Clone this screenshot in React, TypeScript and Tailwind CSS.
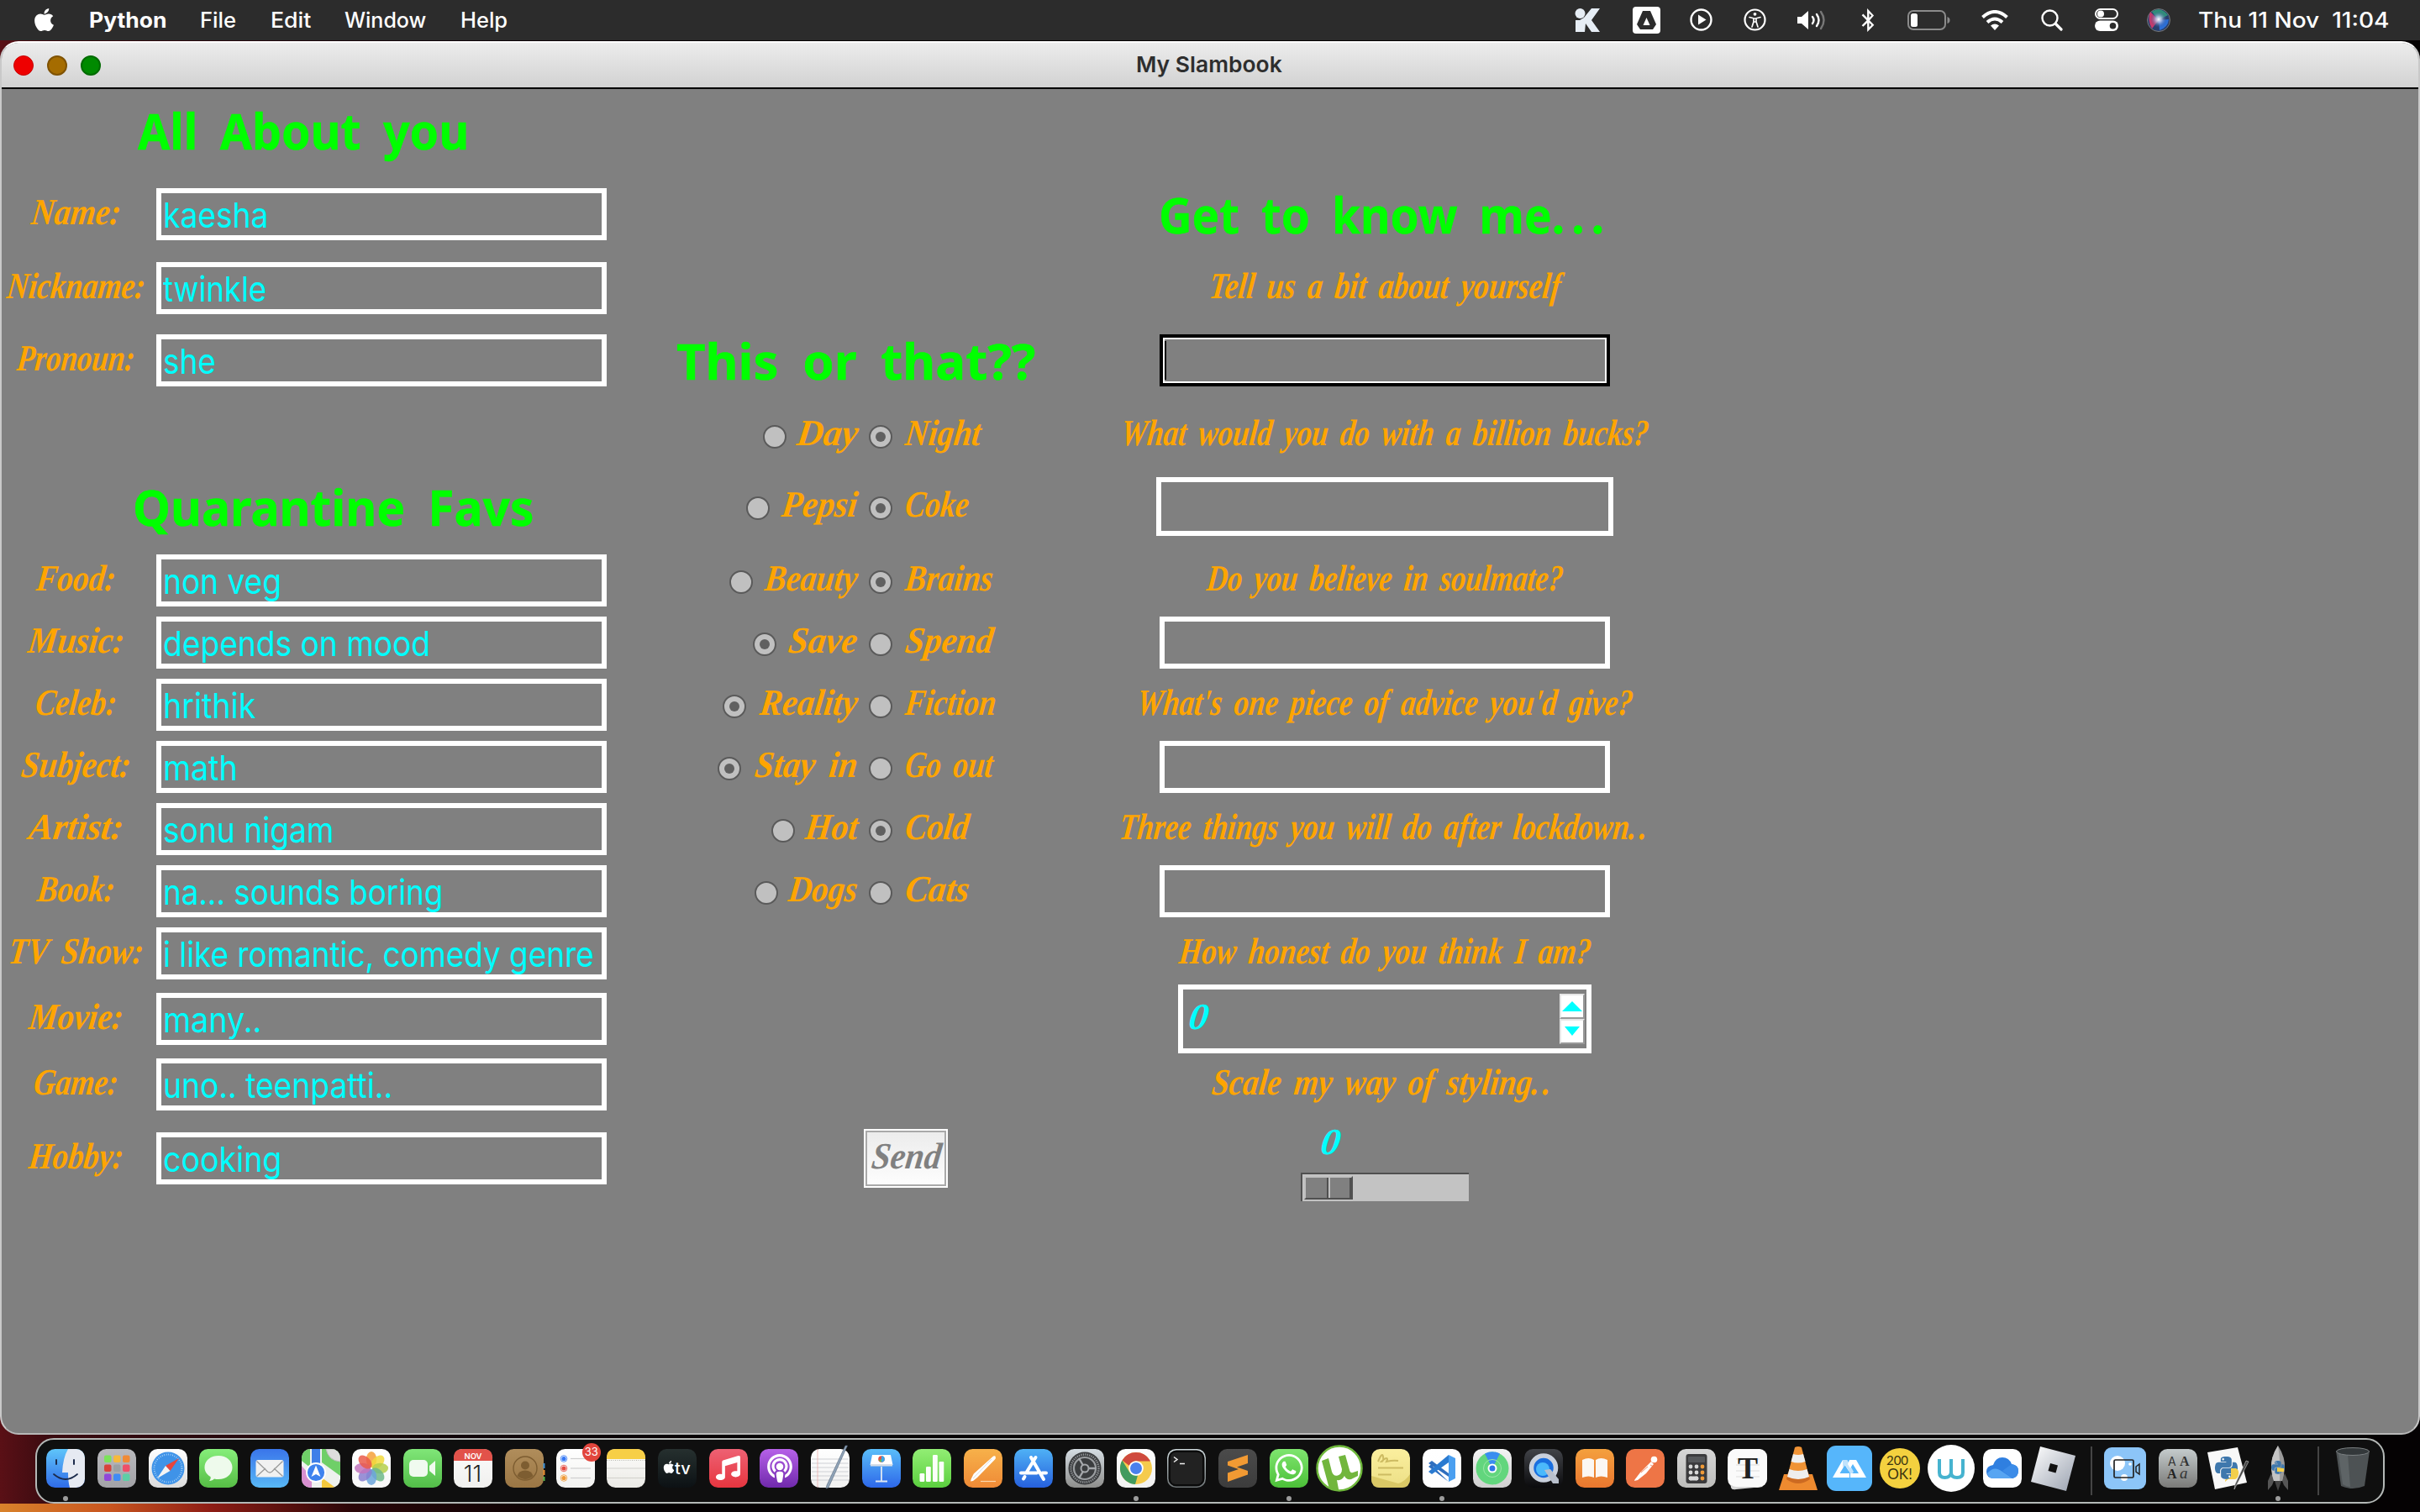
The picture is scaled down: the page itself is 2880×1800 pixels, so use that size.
import React, { useLayoutEffect, useRef, useState } from "react";
import { FaApple, FaWhatsapp, FaPython, FaBluetoothB, FaPodcast, FaMusic } from "react-icons/fa";

/* Text stretched horizontally to a given advance width. */
function Fit({ w, children, className = "", skew = 0 }: { w: number; children: React.ReactNode; className?: string; skew?: number }) {
  const ref = useRef<HTMLSpanElement>(null);
  const [k, setK] = useState(1);
  useLayoutEffect(() => {
    if (ref.current && ref.current.offsetWidth) setK(w / ref.current.offsetWidth);
  }, [w]);
  return (
    <span className={`block shrink-0 whitespace-pre ${className}`} style={{ width: w }}>
      <span ref={ref} className="inline-block origin-bottom-left" style={{ transform: `scaleX(${k}) skewX(${skew}deg)` }}>
        {children}
      </span>
    </span>
  );
}

const Script = ({ w, children, className = "text-[#ffa500]" }: { w: number; children: React.ReactNode; className?: string }) => (
  <Fit w={w} skew={-8} className={`-ml-[4px] pb-[5px] font-['Liberation_Serif',serif] text-[44px] leading-none font-bold italic [word-spacing:7px] ${className}`}>
    {children}
  </Fit>
);

const Heading = ({ w, children }: { w: number; children: React.ReactNode }) => (
  <Fit w={w} className="font-['Noto_Sans',sans-serif] text-[60px] leading-none font-bold text-[#00ff00] [word-spacing:13px] [-webkit-text-stroke:0.5px_#00ff00]">
    {children}
  </Fit>
);

const Entry = ({ text, w }: { text?: string; w?: number }) => (
  <div className="flex h-[62px] w-[536px] items-center border-[6px] border-white pt-[2px] pl-[2px]">
    {text && (
      <Fit w={w!} className="font-['Inter',sans-serif] text-[41px] leading-none text-[#00ffff]">
        {text}
      </Fit>
    )}
  </div>
);

const Radio = ({ on }: { on: boolean }) => (
  <span className="mt-[3px] flex size-7 shrink-0 items-center justify-center rounded-full border-2 border-[#5a5a5a] bg-[#c0c0c0]">
    {on && <span className="size-3 rounded-full bg-[#606060]" />}
  </span>
);

const Label = ({ w, children }: { w: number; children: string }) => (
  <div className="flex items-center justify-center">
    <Script w={w}>{children}</Script>
  </div>
);

const Field = ({ text, w }: { text: string; w: number }) => (
  <div className="flex items-center pl-2">
    <Entry text={text} w={w} />
  </div>
);

const Left = ({ w, x, on, children }: { w: number; x: number; on: boolean; children: string }) => (
  <div className="flex items-center justify-end pr-[8px]">
    <div className="flex items-center justify-between" style={{ width: 1018 - x }}>
      <Radio on={on} />
      <Script w={w}>{children}</Script>
    </div>
  </div>
);

const Right = ({ w, on, children }: { w: number; on: boolean; children: string }) => (
  <div className="flex items-center gap-[17px] pl-2">
    <Radio on={on} />
    <Script w={w}>{children}</Script>
  </div>
);

const Mid = ({ children }: { children?: React.ReactNode }) => <div className="flex items-center justify-center">{children}</div>;

function Form() {
  return (
    <div className="grid grid-cols-[176px_552px_296px_294px_656px] grid-rows-[86px_114px_62px_110px_68px_102px_74px_74px_74px_74px_74px_74px_74px_82px_74px_102px] pt-[6px]">
      <div className="col-span-2 flex items-center justify-center pr-[10px]">
        <Heading w={394}>All About you</Heading>
      </div>
      <div className="col-span-3" />

      <Label w={106}>Name:</Label>
      <Field text="kaesha" w={125} />
      <div className="col-span-2" />
      <Mid><Heading w={538}>Get to know me<span className="tracking-[9px]">...</span></Heading></Mid>

      <Label w={164}>Nickname:</Label>
      <Field text="twinkle" w={123} />
      <div className="col-span-2" />
      <Mid><Script w={418}>Tell us a bit about yourself</Script></Mid>

      <Label w={140}>Pronoun:</Label>
      <Field text="she" w={63} />
      <div className="col-span-2 flex items-center justify-center pr-[13px]">
        <Heading w={427}>This or that??</Heading>
      </div>
      <Mid>
        <div className="h-[62px] w-[536px] border-4 border-black">
          <div className="flex h-full items-center border-2 border-white">
            <span className="h-[46px] w-[2px] bg-black" />
          </div>
        </div>
      </Mid>

      <div className="col-span-2" />
      <Left w={72} x={908} on={false}>Day</Left>
      <Right w={90} on>Night</Right>
      <Mid><Script w={628}>What would you do with a billion bucks?</Script></Mid>

      <div className="col-span-2 flex items-center justify-center pl-[62px]">
        <Heading w={478}>Quarantine Favs</Heading>
      </div>
      <Left w={90} x={888} on={false}>Pepsi</Left>
      <Right w={76} on>Coke</Right>
      <Mid><div className="h-[70px] w-[544px] border-[6px] border-white" /></Mid>

      <Label w={94}>Food:</Label>
      <Field text="non veg" w={141} />
      <Left w={110} x={868} on={false}>Beauty</Left>
      <Right w={104} on>Brains</Right>
      <Mid><Script w={424}>Do you believe in soulmate?</Script></Mid>

      <Label w={114}>Music:</Label>
      <Field text="depends on mood" w={318} />
      <Left w={82} x={896} on>Save</Left>
      <Right w={104} on={false}>Spend</Right>
      <Mid><Entry /></Mid>

      <Label w={96}>Celeb:</Label>
      <Field text="hrithik" w={110} />
      <Left w={116} x={860} on>Reality</Left>
      <Right w={108} on={false}>Fiction</Right>
      <Mid><Script w={590}>What's one piece of advice you'd give?</Script></Mid>

      <Label w={130}>Subject:</Label>
      <Field text="math" w={89} />
      <Left w={122} x={854} on>Stay in</Left>
      <Right w={104} on={false}>Go out</Right>
      <Mid><Entry /></Mid>

      <Label w={112}>Artist:</Label>
      <Field text="sonu nigam" w={203} />
      <Left w={62} x={918} on={false}>Hot</Left>
      <Right w={76} on>Cold</Right>
      <Mid><Script w={632}>Three things you will do after lockdown<span className="tracking-[5px]">..</span></Script></Mid>

      <Label w={92}>Book:</Label>
      <Field text="na... sounds boring" w={333} />
      <Left w={82} x={898} on={false}>Dogs</Left>
      <Right w={76} on={false}>Cats</Right>
      <Mid><Entry /></Mid>

      <Label w={160}>TV Show:</Label>
      <Field text="i like romantic, comedy genre" w={513} />
      <div className="col-span-2" />
      <Mid><Script w={490}>How honest do you think I am?</Script></Mid>

      <Label w={112}>Movie:</Label>
      <Field text="many.." w={117} />
      <div className="col-span-2" />
      <Mid>
        <div className="flex h-[82px] w-[492px] items-center justify-between border-[6px] border-white pr-[2px] pl-[8px]">
          <Script w={23} className="text-[#00ffff]">0</Script>
          <div className="flex h-[60px] w-[30px] flex-col">
            {["M15 9 L27 21 H3 Z", "M15 20 L24 9 H6 Z"].map((d) => (
              <span key={d} className="h-[30px] border-2 border-t-[#e6e6e6] border-r-[#999] border-b-[#999] border-l-[#e6e6e6] bg-white">
                <svg viewBox="2 2 26 26" className="size-[26px]"><path d={d} fill="#00ffff" /></svg>
              </span>
            ))}
          </div>
        </div>
      </Mid>

      <Label w={100}>Game:</Label>
      <Field text="uno.. teenpatti.." w={273} />
      <div className="col-span-2" />
      <Mid><Script w={408} className="mr-[4px] text-[#ffa500]">Scale my way of styling<span className="tracking-[5px]">..</span></Script></Mid>

      <Label w={112}>Hobby:</Label>
      <Field text="cooking" w={141} />
      <div className="col-span-2 flex items-center pl-[298px]">
        <div className="flex h-[70px] w-[100px] items-center justify-center border-2 border-white">
          <div className="flex h-full w-full items-center justify-center border-2 border-[#a9a9a9] bg-gradient-to-b from-[#ececec] to-[#fdfdfd]">
            <Script w={82} className="text-[#808080]">Send</Script>
          </div>
        </div>
      </div>
      <div className="flex flex-col items-center justify-between pt-[10px]">
        <Script w={23} className="mr-[132px] text-[#00ffff]">0</Script>
        <div className="flex h-[34px] w-[200px] border-t-2 border-l-2 border-[#505050] bg-[#c3c3c3] pt-[2px] pl-[2px]">
          <div className="flex h-[28px] w-[58px] border-2 border-t-[#c0c0c0] border-r-[#505050] border-b-[#505050] border-l-[#c0c0c0]">
            <span className="h-full w-[27px] border-r-2 border-[#505050] bg-[#808080]" />
            <span className="h-full w-[27px] border-r-2 border-l-2 border-l-[#c0c0c0] border-r-[#505050] bg-[#808080]" />
          </div>
        </div>
      </div>
    </div>
  );
}

function MenuBar() {
  const item = "font-['Inter',sans-serif] text-[25px] leading-[48px] text-white";
  return (
    <header className="flex h-12 items-center bg-[#2c2c2c] pb-px">
      <FaApple className="ml-[37px] size-[31px] text-white" />
      <Fit w={92} className={`${item} ml-[38px] font-bold`}>Python</Fit>
      <Fit w={43} className={`${item} ml-[40px] font-medium`}>File</Fit>
      <Fit w={48} className={`${item} ml-[41px] font-medium`}>Edit</Fit>
      <Fit w={97} className={`${item} ml-[40px] font-medium`}>Window</Fit>
      <Fit w={56} className={`${item} ml-[41px] font-medium`}>Help</Fit>
      <div className="flex-1" />
      <svg className="h-7 w-[31px]" viewBox="0 0 31 28" fill="#e6edf5"><circle cx="6.500" cy="6" r="6" /><path d="M1 14h5l5-3L20 0h10L20 14l10 14H20l-7-10-1 10H1z" /></svg>
      <svg className="ml-[38px] h-8 w-[33px]" viewBox="0 0 33 32"><rect width="33" height="32" rx="4" fill="#fff" /><path d="M12 5h9l7 16-4 6H9l-4-6z" fill="#2c2c2c" /><path d="M16.500 13l4 9h-8z" fill="#fff" /></svg>
      <svg className="ml-[35px] size-[27px]" viewBox="0 0 27 27"><circle cx="13.500" cy="13.500" r="12" fill="none" stroke="#fff" strokeWidth="2.400" /><path d="M10 7.500l9.500 6-9.500 6z" fill="#fff" /></svg>
      <svg className="ml-[37px] size-[27px]" viewBox="0 0 27 27" fill="none" stroke="#fff"><circle cx="13.500" cy="13.500" r="12" strokeWidth="2.200" /><circle cx="13.500" cy="6.800" r="1.900" fill="#fff" stroke="none" /><path d="M7 10.500l5 1.300v4L10 22M20 10.500l-5 1.300v4L17 22M12 12h3v4h-3z" strokeWidth="1.700" strokeLinecap="round" /></svg>
      <svg className="ml-[36px] h-[26px] w-[37px]" viewBox="0 0 37 26" fill="none" stroke="#fff" strokeLinecap="round" strokeWidth="2.400"><path d="M1 9h5l8-7v22l-8-7H1z" fill="#fff" stroke="none" /><path d="M19 9q3 4 0 8M24 6q5 7 0 14" /><path d="M29 3q7 10 0 20" stroke="#777" /></svg>
      <FaBluetoothB className="ml-[38px] h-7 w-[20px] text-white" />
      <svg className="ml-[37px] h-6 w-[51px]" viewBox="0 0 51 24"><rect x="1" y="1" width="44" height="22" rx="6" fill="none" stroke="#8b8b8b" strokeWidth="2" /><rect x="4" y="4" width="8" height="16" rx="2.500" fill="#fff" /><path d="M47.500 8v8q3-1 3-4t-3-4z" fill="#8b8b8b" /></svg>
      <svg className="ml-[37px] h-6 w-8" viewBox="0 0 32 24" fill="none" stroke="#fff" strokeWidth="4"><path d="M1.500 8.500q14.500-13 29 0M7 14.500q9-8 18 0" /><path d="M16 24l-5-5.500q5-4 10 0z" fill="#fff" stroke="none" /></svg>
      <svg className="ml-[39px] size-[26px]" viewBox="0 0 26 26" fill="none" stroke="#fff" strokeLinecap="round"><circle cx="10.500" cy="10.500" r="9" strokeWidth="2.400" /><path d="M17.500 17.500l6.500 6.500" strokeWidth="3.200" /></svg>
      <svg className="ml-[38px] h-[27px] w-[28px]" viewBox="0 0 28 27"><rect x="1" y="1" width="26" height="11" rx="5.500" fill="none" stroke="#fff" strokeWidth="2" /><circle cx="7" cy="6.500" r="4" fill="#fff" /><rect y="14.500" width="28" height="12.500" rx="6.200" fill="#fff" /><circle cx="21.500" cy="20.800" r="3.800" fill="#2c2c2c" /></svg>
      <svg className="mr-[33px] ml-[34px] size-7" viewBox="0 0 28 28"><defs><radialGradient id="siri"><stop offset="0" stopColor="#fff" /><stop offset=".35" stopColor="#b9c6ea" stopOpacity=".8" /><stop offset="1" stopColor="#2a4b8c" stopOpacity="0" /></radialGradient></defs><circle cx="14" cy="14" r="13.500" fill="#28406f" stroke="#777" /><path d="M14 14L4 4Q0 14 6 24z" fill="#c43a6b" /><path d="M14 14L6 4q10-7 19 4z" fill="#2f8f78" /><path d="M14 14l12-1q-1 10-11 13z" fill="#2c6fd6" /><circle cx="14" cy="13" r="10" fill="url(#siri)" /></svg>
      <Fit w={228} className={`${item} mr-[36px] font-medium`}>{"Thu 11 Nov  11:04"}</Fit>
    </header>
  );
}

/* Rounded-square dock icon, drawn in a 46 × 46 box. */
const Tile = ({ from, to, id, children }: { from: string; to: string; id: string; children?: React.ReactNode }) => (
  <svg viewBox="0 0 46 46" className="size-[46px] overflow-visible">
    <defs>
      <linearGradient id={id} x1="0" y1="0" x2="0" y2="1"><stop offset="0" stopColor={from} /><stop offset="1" stopColor={to} /></linearGradient>
      <clipPath id={`${id}-clip`}><rect width="46" height="46" rx="10.500" /></clipPath>
    </defs>
    <rect width="46" height="46" rx="10.500" fill={`url(#${id})`} />
    {children}
  </svg>
);

const petals = ["#f4a03a", "#f2d93c", "#b5cf4b", "#6fb98a", "#6ba4dc", "#8a7fd0", "#c274bd", "#ea5a4b"];
const pads = ["#7be35a", "#f6b93c", "#f08a35", "#d8423a", "#9aa0a3", "#ee4f68", "#9147d8", "#3f8cf5", "#5ccfa6"];

const dock: { dot?: boolean; badge?: string; el: React.ReactNode }[] = [
  { dot: true, el: <Tile id="finder" from="#5fc5fa" to="#2f6be8"><g clipPath="url(#finder-clip)"><path d="M26 0h20v46H28q-2-7-2-18h-7Q20 10 26 0z" fill="#e6eaf2" /></g><path d="M12 13v5M33 13v5" stroke="#1c2c4c" strokeWidth="2" strokeLinecap="round" /><path d="M9 30q14 12 28 0" fill="none" stroke="#1c2c4c" strokeWidth="1.800" strokeLinecap="round" /></Tile> },
  { el: <Tile id="pad" from="#b9b9bd" to="#a2a2a6">{pads.map((c, i) => <rect key={c} x={8 + (i % 3) * 11} y={7.500 + Math.floor(i / 3) * 11} width="8.500" height="8.500" rx="2" fill={c} />)}</Tile> },
  { el: <Tile id="safari" from="#ffffff" to="#dcdcdc"><circle cx="23" cy="23" r="19.500" fill="#3f93e8" /><circle cx="23" cy="23" r="16.500" fill="none" stroke="#b9dcf8" strokeWidth="2" strokeDasharray=".7 1.800" /><path d="M36 11L25.500 26 20 20z" fill="#e8453c" /><path d="M10 35l10-15 5.500 6z" fill="#f4f4f4" /></Tile> },
  { el: <Tile id="msg" from="#86ee7a" to="#56bd45"><path d="M23 8c9.500 0 16.500 6 16.500 14S32.500 36 23 36c-2 0-3.500-.2-5-.6-1.500 1.500-3.500 2.500-6 2.500 1.500-1.500 2-3 1.500-5C9 30.500 6.500 26.500 6.500 22 6.500 14 13.500 8 23 8z" fill="#eefaec" /></Tile> },
  { el: <Tile id="mail" from="#3a75ea" to="#58b8f6"><rect x="6.500" y="13" width="33" height="20.500" rx="2.500" fill="#f1f1f1" /><path d="M7.500 14.500l13 12.500q2.500 2 5 0l13-12.500M7.500 32.500L18 23M38.500 32.500L28 23" fill="none" stroke="#9a9a9a" strokeWidth="1.300" /></Tile> },
  { el: <Tile id="maps" from="#eef1ee" to="#eef1ee"><g clipPath="url(#maps-clip)"><path d="M0 0h10v22L0 14z" fill="#6fcf68" /><path d="M24 0h22v32L24 16z" fill="#6fcf68" /><path d="M46 0v15Q32 14 29 0z" fill="#ddd" stroke="#bbb" /><path d="M0 20l12 14v12H0z" fill="#d88fd0" /><path d="M24 34l16 12H24z" fill="#f5c93d" /><path d="M12 0h10v24H12z" fill="#3f7fe8" /></g><circle cx="17" cy="28" r="11" fill="#3f83ee" stroke="#fff" strokeWidth="1.800" /><path d="M17 19.500l5.500 13.500-5.500-3-5.500 3z" fill="#fff" /></Tile> },
  { el: <Tile id="photos" from="#ffffff" to="#f7f7f7">{petals.map((c, i) => <ellipse key={c} cx="23" cy="12.500" rx="6.200" ry="9.500" fill={c} opacity=".85" transform={`rotate(${i * 45} 23 23)`} />)}</Tile> },
  { el: <Tile id="ft" from="#80e678" to="#52bd48"><rect x="7" y="13" width="22" height="20" rx="5" fill="#f0faef" /><path d="M31 20l7-6v18l-7-6z" fill="#f0faef" /></Tile> },
  { el: <Tile id="cal" from="#fbfbfb" to="#f0f0ee"><path d="M0 14V10.500Q0 0 10.500 0h25Q46 0 46 10.500V14z" fill="#e2524a" /><text x="23" y="11.500" textAnchor="middle" fontSize="9.500" fontWeight="600" fill="#fff" fontFamily="Inter">NOV</text><text x="22.500" y="39" textAnchor="middle" fontSize="27" fontWeight="300" fill="#222" fontFamily="Inter">11</text></Tile> },
  { el: <Tile id="contacts" from="#b08d5b" to="#9b7644"><path d="M45.500 17h2v6h-2z" fill="#3b8fd4" /><path d="M45.500 25h2v6h-2z" fill="#e88b2e" /><path d="M45.500 33h2v5h-2z" fill="#55b54c" /><circle cx="24" cy="23" r="14" fill="none" stroke="#7d5d31" strokeWidth="1.400" /><circle cx="24" cy="19.500" r="5" fill="#7d5d31" /><path d="M14.500 32q2-6.500 9.500-6.500t9.500 6.500q-9 8-19 0z" fill="#7d5d31" /></Tile> },
  { badge: "33", el: <Tile id="rem" from="#ffffff" to="#f2f2f0">{["#3478f6", "#e64b40", "#f09a37"].map((c, i) => <g key={c}><circle cx="9" cy={11.500 + i * 11.500} r="3.800" fill="none" stroke={c} strokeWidth=".8" /><circle cx="9" cy={11.500 + i * 11.500} r="2.600" fill={c} /><path d={`M17 ${11.500 + i * 11.500}h24`} stroke="#cfcfcf" strokeWidth="1.200" /></g>)}</Tile> },
  { el: <Tile id="notes" from="#fdfdfb" to="#ebeae6"><path d="M0 12V10.500Q0 0 10.500 0h25Q46 0 46 10.500V12z" fill="#f7cf46" /><path d="M0 13.500h46" stroke="#b9b9b0" strokeDasharray="1 1.500" /><path d="M0 23h46M0 34.500h46" stroke="#d2d1cc" /></Tile> },
  { el: <Tile id="tv" from="#26302f" to="#0c1114"><FaApple x="4.500" y="13" size="17" color="#fff" /><text x="20" y="29.500" fontSize="20" fontWeight="500" fill="#fff" fontFamily="Inter">tv</text></Tile> },
  { el: <Tile id="music" from="#ee6173" to="#e6353f"><FaMusic x="8" y="8" size="29" color="#fff" /></Tile> },
  { el: <Tile id="pod" from="#b661e8" to="#7029ac"><FaPodcast x="7" y="6" size="34" color="#fff" /></Tile> },
  { el: <Tile id="text" from="#ffffff" to="#f1f1f1"><path d="M1 12h44M1 17h44M1 22h44M1 27h44M1 32h44M1 37h44" stroke="#c9ccd0" strokeWidth=".9" /><path d="M8 0v46" stroke="#e9a4a0" strokeWidth=".7" /><path d="M43.500-4L21 46l-3 1 1-4L41-4z" fill="#8fa3b8" stroke="#56677a" strokeWidth=".6" /></Tile> },
  { el: <Tile id="key" from="#5abefa" to="#2d67e9"><path d="M12 7h22l2.500 12h-27z" fill="#fff" /><path d="M10 18h26v2.500H10z" fill="#d5dde6" /><circle cx="23" cy="12" r="3.800" fill="#e34f43" /><path d="M23 8.200a3.800 3.800 0 010 7.600z" fill="#3aa6e8" /><path d="M19.500 13.500L23 12v3.800z" fill="#67bd4f" /><path d="M23 21v17M16 38.500h14" stroke="#dfe8f2" strokeWidth="1.800" /></Tile> },
  { el: <Tile id="num" from="#92ee74" to="#5bcf3f">{[[8.500, 10], [16, 18], [24, 32], [31.500, 24]].map(([x, h]) => <rect key={x} x={x} y={39 - h} width="5.800" height={h} rx="1.200" fill="#fbfffa" />)}</Tile> },
  { el: <Tile id="pages" from="#f7b14a" to="#ef8a36"><path d="M37.500 8.500q1 2-.5 4L16 34l-5 4-3 .5.800-3 3-6L34 9.500q2-2 3.500-1z" fill="#fff" /><path d="M11 35l22-23" stroke="#d9d9d9" /><path d="M20 38.500h18" stroke="#fbd7ad" strokeWidth="1.200" /></Tile> },
  { el: <Tile id="store" from="#4fb1f5" to="#2660dd"><g stroke="#fff" strokeWidth="4" strokeLinecap="round" fill="none"><path d="M25.500 10L14.500 28M20 10l15 26M8 28.500h19M33.500 28.500H38M12.500 33l-1.500 2.500" /></g></Tile> },
  { el: <Tile id="prefs" from="#d5dde3" to="#8e8e8c"><circle cx="23" cy="23" r="19.500" fill="#3b3d3f" /><circle cx="23" cy="23" r="16.500" fill="none" stroke="#8f9295" strokeWidth="2.500" strokeDasharray="1.300 1.200" /><circle cx="23" cy="23" r="13" fill="none" stroke="#9a9da0" strokeWidth="2.200" /><circle cx="23" cy="23" r="4.500" fill="none" stroke="#a5a8ab" strokeWidth="2" /><path d="M27 23h10M21 19.500L16 11M21 26.500L16 35" stroke="#a5a8ab" strokeWidth="2.400" /></Tile> },
  { dot: true, el: <Tile id="chrome" from="#ffffff" to="#f1f1f1"><circle cx="23" cy="23" r="19" fill="#f5cb4d" /><path d="M6.500 13.500a19 19 0 0133 0L40 14.500H23A8.500 8.500 0 0015 20z" fill="#cf4a3e" /><path d="M6.500 13.500L15.500 28q3 4 9.500 3.500L22 42A19 19 0 016.500 13.500z" fill="#429b5e" /><circle cx="23" cy="23" r="8.800" fill="#fff" /><circle cx="23" cy="23" r="7" fill="#4a80ec" /></Tile> },
  { el: <Tile id="term" from="#cfdadd" to="#6c7274"><rect x="1.500" y="1.500" width="43" height="43" rx="9.500" fill="#0a0a0a" /><rect x="4" y="4" width="38" height="38" rx="6" fill="#222" /><path d="M8 9.500l4 3-4 3M15 17.500h6" stroke="#eee" strokeWidth="1.500" fill="none" /></Tile> },
  { el: <Tile id="subl" from="#4b4b4b" to="#3c3c3c"><path d="M35 7v10l-13 4.500 13 4.500v4.500L11 39V28.500l13-4.500-13-4.500V15z" fill="#f29a33" /></Tile> },
  { dot: true, el: <Tile id="wa" from="#7fe56f" to="#4cc038"><FaWhatsapp x="4" y="3.500" size="38" color="#fff" /></Tile> },
  { el: <svg viewBox="0 0 56 56" className="size-[56px] shrink-0"><defs><clipPath id="ut"><circle cx="28" cy="28" r="26.500" /></clipPath></defs><circle cx="28" cy="28" r="26.500" fill="#fff" /><g clipPath="url(#ut)"><path d="M7 19l8-3 4 16q2 6 7 4.500T31 29l-4-15 8-2 5 18q1 4 4 3l6-2v6l-8 4q-6 1-8-4-3 6-9 5l3 16-11-2z" fill="#72b63d" /></g><circle cx="28" cy="28" r="26.500" fill="none" stroke="#6fb83c" strokeWidth="2.500" /></svg> },
  { el: <Tile id="stick" from="#fbef9e" to="#ecdf86"><path d="M0 32v4Q0 46 10.500 46h25Q46 46 46 36v-6q-6 9-14 11z" fill="#d9c866" /><path d="M8 15q5-12 6-6t-2 6q4-4 6-4t0 4q8-2 14-1M8 22.500h30M8 30.500h16" fill="none" stroke="#cdbb62" strokeWidth="2" /></Tile> },
  { dot: true, el: <Tile id="code" from="#ffffff" to="#fdfdfd"><path d="M31 7v32L10 18.500 7 21l24 18V29L11 14 7 17l24 16z" fill="#2f6fbf" /><path d="M31 7L7 27l4 3 20-14z" fill="#2a7ad0" /><path d="M31 7l8 4v24l-8 4z" fill="#4a9ff0" /></Tile> },
  { el: <Tile id="find" from="#f4f4f4" to="#cfcfcf"><circle cx="23" cy="23" r="19.500" fill="#62d67d" /><path d="M23 23L14 5.500a20 20 0 0118 0z" fill="#3a8df0" /><circle cx="23" cy="23" r="10.500" fill="none" stroke="#9be6a8" /><circle cx="23" cy="23" r="4.500" fill="#2f76e8" stroke="#fff" strokeWidth="2" /></Tile> },
  { el: <Tile id="qt" from="#414348" to="#0b0b0d"><circle cx="23" cy="22.500" r="14.500" fill="#1a6fe0" stroke="#c9d0dc" strokeWidth="5.500" /><circle cx="22" cy="24" r="8" fill="#4bb9fb" /><path d="M24 25l7-1 10 12v5h-7z" fill="#b8bfcb" /></Tile> },
  { el: <Tile id="books" from="#f4a03e" to="#e9772f"><path d="M22 13q-6-4-14 0v21q8-3 14 0zM24 13q6-4 14 0v21q-8-3-14 0z" fill="#fbf7f2" /></Tile> },
  { el: <Tile id="post" from="#ee7546" to="#ee7546"><circle cx="33.500" cy="12.500" r="3.800" fill="#fff" /><path d="M30 15l3 3-9 11-10 8-4 1 .500-1.500L17 28z" fill="#fff" /><path d="M29 19l4 2-6 7M18 28l8-7" stroke="#ee7546" strokeWidth=".8" fill="none" /></Tile> },
  { el: <Tile id="calc" from="#d6d6d6" to="#bdbdbb"><rect x="10.500" y="6" width="25" height="35" rx="3" fill="#3b3b3d" /><rect x="13" y="9" width="20" height="7" rx="1" fill="#56585b" />{[0, 1, 2].map((r) => [0, 1, 2].map((c) => <circle key={`${r}${c}`} cx={16 + c * 7} cy={21 + r * 7} r="2.400" fill={c === 2 ? "#f09a37" : "#d8d8d8"} />))}<path d="M16 35h7" stroke="#d8d8d8" strokeWidth="4.800" strokeLinecap="round" /></Tile> },
  { el: <Tile id="typo" from="#ffffff" to="#f4f4f4"><path d="M0 10l4 36q1 3 6 2l32-3z" fill="#d8d8d8" /><rect x="1" width="46" height="45" rx="9" fill="#fafafa" /><path d="M10 12h28M10 19h28M10 26h28M10 33h28" stroke="#ddd" /><text x="24" y="35" textAnchor="middle" fontSize="36" fontWeight="600" fill="#222" fontFamily="Liberation Serif">T</text></Tile> },
  { el: <svg viewBox="0 0 46 52" className="h-[52px] w-[46px]"><path d="M6 33h34l6 19H0z" fill="#ee8a2f" /><path d="M9 39q14 10 28 0l-2-8H11z" fill="#cc6a22" /><path d="M19 1q4-2 8 0l9 35q-13 6-26 0z" fill="#f09335" /><path d="M17 9q6 2 12 0l2.500 9q-8.500 3-17 0zM12.500 27q10.500 4 21 0l2.500 9q-13 6-26 0z" fill="#eee" /></svg> },
  { el: <svg viewBox="0 0 54 54" className="size-[54px]"><rect width="54" height="54" rx="11" fill="#56b6fb" /><path d="M7 38l12-21h5l5 9-3 4-4.500-7-6 10H27v5z" fill="#fff" /><path d="M19 17h5l8 14-3 4-7-12-3 3z" fill="#bfe3fd" /><path d="M27 17h8l12 21H28v-5h10l-7-11-3 5-3-5z" fill="#fff" /></svg> },
  { el: <svg viewBox="0 0 50 50" className="size-[50px]"><circle cx="25" cy="25" r="24" fill="#f4d13f" /><text x="22" y="21" textAnchor="middle" fontSize="15" fill="#3a3410" fontFamily="Lato">200</text><text x="25" y="38" textAnchor="middle" fontSize="17" fill="#3a3410" fontFamily="Lato">OK!</text></svg> },
  { el: <svg viewBox="0 0 56 56" className="size-[56px] shrink-0"><circle cx="28" cy="28" r="28" fill="#fff" /><path d="M14 17v16q0 6 6.500 6t7.500-6V17M28 33q0 6 7 6t7-6V17" fill="none" stroke="#46b3cf" strokeWidth="4" /></svg> },
  { el: <Tile id="cloud" from="#ffffff" to="#ffffff"><path d="M12 35q-8-1-8-8t8-8q3-9 11-9t11 8q8 1 8 8t-7 9z" fill="#2f7fe0" /><path d="M5 29q8-10 18-2l12 8H12q-5 0-7-6z" fill="#57a5f2" /><path d="M23 26l11-8q8 1 8 8t-7 9z" fill="#3c8ce8" /></Tile> },
  { el: <svg viewBox="0 0 54 54" className="size-[54px]"><defs><linearGradient id="rbx" x1="0" y1="0" x2="1" y2="1"><stop offset="0" stopColor="#fff" /><stop offset="1" stopColor="#9aa2b0" /></linearGradient></defs><path d="M12 1l42 11-11 42L1 43z" fill="url(#rbx)" /><path d="M24 21l9 2.500-2.500 9-9-2.500z" fill="#111" /></svg> },
];

const Dot = ({ on }: { on?: boolean }) => <span className={`size-[6px] rounded-full ${on ? "bg-[#9c9c9c]" : "bg-transparent"}`} />;

function DockItem({ w, dot, badge, children }: { w: number; dot?: boolean; badge?: string; children: React.ReactNode }) {
  return (
    <div className="flex shrink-0 flex-col items-center" style={{ width: w }}>
      <div className="relative flex h-[67px] items-center justify-center pt-px">
        {children}
        {badge && (
          <span className="absolute top-[4px] -right-[7px] flex size-[22px] items-center justify-center rounded-full bg-[#e2463d] font-['Inter',sans-serif] text-[13px] text-white">{badge}</span>
        )}
      </div>
      <Dot on={dot} />
    </div>
  );
}

function Dock() {
  return (
    <div className="mx-auto mr-[42px] ml-[42px] flex h-[78px] rounded-[22px] border-2 border-[#b4b8b6] bg-[#0f0f0f] pl-[4px]">
      {dock.map((d, i) => (
        <DockItem key={i} w={60.65} dot={d.dot} badge={d.badge}>{d.el}</DockItem>
      ))}
      <span className="mt-2 ml-[14px] h-[58px] w-[2px] shrink-0 bg-[#444]" />
      <div className="w-[9px] shrink-0" />
      <DockItem w={61}>
        <svg viewBox="0 0 50 50" className="size-[50px]"><rect width="50" height="50" rx="9" fill="#8cc5f8" /><circle cx="16" cy="19" r="9" fill="#fff" /><circle cx="24" cy="36" r="4" fill="#fff" /><rect x="12" y="15" width="23" height="21" rx="1.500" fill="none" stroke="#222" strokeWidth="1.700" /><circle cx="31" cy="20" r="1.800" fill="#fff" /><path d="M38 23l4-3v12l-4-3z" fill="none" stroke="#222" strokeWidth="1.500" /></svg>
      </DockItem>
      <div className="w-[2px] shrink-0" />
      <DockItem w={61}>
        <Tile id="fontbook" from="#c4cbcc" to="#7a7a78"><text x="11" y="20" fontSize="14" fill="#333" fontFamily="Inter">A</text><text x="25" y="20" fontSize="16" fontWeight="700" fill="#333" fontFamily="Liberation Serif">A</text><text x="10" y="35" fontSize="16" fontWeight="700" fill="#222" fontFamily="Liberation Serif">A</text><text x="25" y="35" fontSize="19" fontStyle="italic" fill="#333" fontFamily="Liberation Serif">a</text></Tile>
      </DockItem>
      <DockItem w={58}>
        <svg viewBox="0 0 52 52" className="size-[52px]"><path d="M1 7l36-6 11 42-38 8z" fill="#f8f8f8" /><g color="#3f78ad"><FaPython x="8" y="10" size="31" /></g><path d="M29 36V26h6q4 2 3 7-1 6-5 6h-8q-3-1-3 3z" fill="#f3cf4b" /><path d="M50 18l-15 29-2 4 1-6 13-28z" fill="#444" stroke="#ccc" strokeWidth=".6" /></svg>
      </DockItem>
      <DockItem w={61} dot>
        <svg viewBox="0 0 24 54" className="h-[54px] w-[24px]"><path d="M12 0q9 14 8 27l-2 15H6L4 27Q3 14 12 0z" fill="#9a9a9a" /><path d="M12 0q3 16 2 42H6L4 27Q3 14 12 0z" fill="#c4c4c4" /><path d="M4 33L0 42v11l5-6 2-5M20 33l4 9v11l-5-6-2-5" fill="#555" /><path d="M8 42h8l-4 12z" fill="#444" /><g color="#3f78ad"><FaPython x="3" y="17" size="18" /></g><path d="M11 31h8v-4l-8-1z" fill="#f3cf4b" /></svg>
      </DockItem>
      <span className="mt-2 ml-[16px] h-[58px] w-[2px] shrink-0 bg-[#444]" />
      <div className="w-[12px] shrink-0" />
      <DockItem w={56}>
        <svg viewBox="0 0 40 50" className="h-[50px] w-[40px]"><path d="M0 4l6 42q14 6 28 0l6-42z" fill="#4d5254" /><path d="M3 8l5 36q5 3 9 3L14 8z" fill="#5e6466" /><ellipse cx="20" cy="5" rx="19.500" ry="4.500" fill="#33383a" stroke="#7b8082" /></svg>
      </DockItem>
    </div>
  );
}

export default function App() {
  return (
    <div className="flex h-[1800px] w-[2880px] flex-col overflow-hidden bg-[#050203] bg-[linear-gradient(90deg,#5a1016_0px,#3a0b10_60px,#12050a_500px,#050203_900px)]">
      <MenuBar />
      <main className="mt-px h-[1659px] rounded-[22px] border-2 border-t-white border-r-[#c9c9c9] border-b-[#b8b8b8] border-l-[#c9c9c9] bg-[#808080]">
        <div className="flex h-[55px] items-center rounded-t-[20px] border-b-2 border-black bg-gradient-to-b from-[#ececec] to-[#d2d2d2] pl-[14px]">
          <div className="flex w-[1336px] gap-4">
            <span className="size-6 rounded-full border border-[#c80000] bg-[#ee0000]" />
            <span className="size-6 rounded-full border-2 border-[#7f5200] bg-[#a56c00]" />
            <span className="size-6 rounded-full border-2 border-[#006b00] bg-[#008a00]" />
          </div>
          <Fit w={174} className="pb-px font-['Inter',sans-serif] text-[26px] leading-none font-semibold text-[#2e2e2e]">My Slambook</Fit>
        </div>
        <Form />
      </main>
      <div className="h-[4px] shrink-0" />
      <Dock />
      <div className="h-[10px] shrink-0 bg-[linear-gradient(90deg,#d9822b_0px,#c8551f_130px,#8e1d15_250px,#2a0608_420px,#050203_700px)]" />
    </div>
  );
}
